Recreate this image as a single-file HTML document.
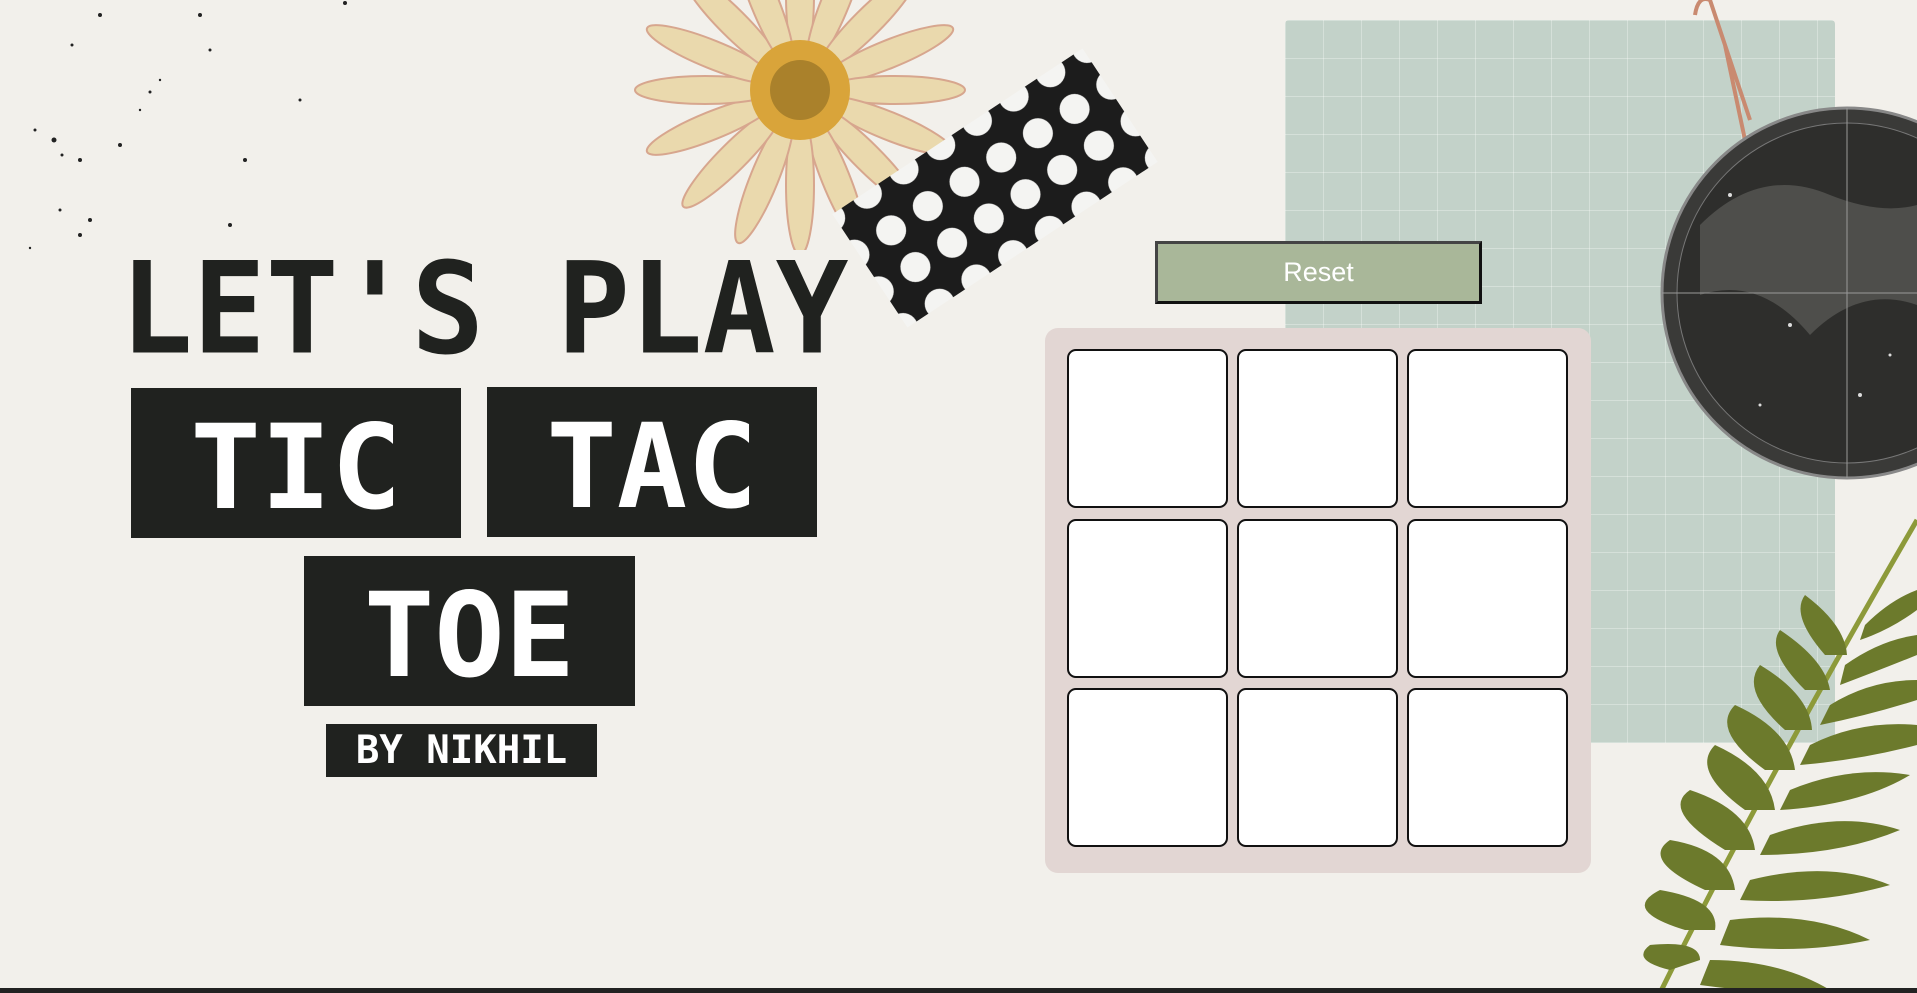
<!DOCTYPE html>
<html><head><meta charset="utf-8"><style>
html,body{margin:0;padding:0}
body{width:1917px;height:993px;position:relative;overflow:hidden;background:#f2f0eb;font-family:"DejaVu Sans Mono","Liberation Mono",monospace}
.abs{position:absolute}
.box{position:absolute;background:#20221f;color:#fff;font-weight:bold;display:flex;align-items:center;justify-content:center}
.cell{position:absolute;width:161px;height:159px;background:#fff;border:2px solid #111;border-radius:9px;box-sizing:border-box}
</style></head><body>
<svg class="abs" style="left:0;top:0" width="420" height="260">
<g fill="#222">
<circle cx="100" cy="15" r="2"/><circle cx="72" cy="45" r="1.5"/><circle cx="54" cy="140" r="2.5"/><circle cx="62" cy="155" r="1.5"/><circle cx="80" cy="160" r="2"/><circle cx="120" cy="145" r="2"/><circle cx="150" cy="92" r="1.5"/><circle cx="210" cy="50" r="1.5"/><circle cx="245" cy="160" r="2"/><circle cx="90" cy="220" r="2"/><circle cx="60" cy="210" r="1.5"/><circle cx="35" cy="130" r="1.5"/><circle cx="300" cy="100" r="1.5"/><circle cx="230" cy="225" r="2"/><circle cx="80" cy="235" r="2"/><circle cx="160" cy="80" r="1.2"/><circle cx="200" cy="15" r="2"/><circle cx="140" cy="110" r="1.2"/><circle cx="345" cy="3" r="2"/><circle cx="30" cy="248" r="1.2"/>
</g></svg>
<div class="abs" style="left:1285px;top:20px;width:550px;height:723px;background-color:#c3d2c9;background-image:linear-gradient(rgba(255,255,255,.3) 1px,transparent 1px),linear-gradient(90deg,rgba(255,255,255,.3) 1px,transparent 1px);background-size:38px 38px;border-radius:4px"></div>
<svg class="abs" style="left:1690px;top:0" width="120" height="150"><path d="M5 15 Q8 -5 20 0 L60 120 M35 45 L55 140" stroke="#c98a70" stroke-width="4" fill="none"/></svg>
<svg class="abs" style="left:1660px;top:105px" width="257" height="375">
<circle cx="187" cy="188" r="185" fill="#3a3a38" stroke="#888" stroke-width="3"/>
<circle cx="187" cy="188" r="170" fill="#2e2e2c" stroke="#777" stroke-width="1"/>
<path d="M40 120 Q100 60 170 90 Q220 110 257 100 L257 200 Q200 180 150 230 Q100 170 40 190Z" fill="#4e4e4b"/>
<path d="M2 188 H257 M187 3 V373" stroke="#999" stroke-width="1"/>
<g fill="#ddd"><circle cx="70" cy="90" r="2"/><circle cx="130" cy="220" r="2"/><circle cx="200" cy="290" r="2"/><circle cx="100" cy="300" r="1.5"/><circle cx="230" cy="250" r="1.5"/></g>
</svg>
<svg class="abs" style="left:630px;top:0" width="340" height="250">
<g transform="translate(170,90)">
<g fill="#ead9ad" stroke="#d7a68e" stroke-width="2">
<ellipse cx="0" cy="-95" rx="14" ry="70" transform="rotate(0)"/>
<ellipse cx="0" cy="-95" rx="14" ry="70" transform="rotate(22)"/>
<ellipse cx="0" cy="-95" rx="14" ry="70" transform="rotate(45)"/>
<ellipse cx="0" cy="-95" rx="14" ry="70" transform="rotate(68)"/>
<ellipse cx="0" cy="-95" rx="14" ry="70" transform="rotate(90)"/>
<ellipse cx="0" cy="-95" rx="14" ry="70" transform="rotate(112)"/>
<ellipse cx="0" cy="-95" rx="14" ry="70" transform="rotate(135)"/>
<ellipse cx="0" cy="-95" rx="14" ry="70" transform="rotate(158)"/>
<ellipse cx="0" cy="-95" rx="14" ry="70" transform="rotate(180)"/>
<ellipse cx="0" cy="-95" rx="14" ry="70" transform="rotate(202)"/>
<ellipse cx="0" cy="-95" rx="14" ry="70" transform="rotate(225)"/>
<ellipse cx="0" cy="-95" rx="14" ry="70" transform="rotate(248)"/>
<ellipse cx="0" cy="-95" rx="14" ry="70" transform="rotate(270)"/>
<ellipse cx="0" cy="-95" rx="14" ry="70" transform="rotate(292)"/>
<ellipse cx="0" cy="-95" rx="14" ry="70" transform="rotate(315)"/>
<ellipse cx="0" cy="-95" rx="14" ry="70" transform="rotate(338)"/>
</g>
<circle r="50" fill="#d9a43a"/><circle r="30" fill="#8a6a22" opacity=".6"/>
</g></svg>
<svg class="abs" style="left:830px;top:20px" width="340" height="330">
<defs><pattern id="dots" width="44" height="44" patternUnits="userSpaceOnUse"><rect width="44" height="44" fill="#1c1c1c"/><circle cx="22" cy="22" r="15" fill="#f4f4f2"/></pattern></defs>
<g transform="translate(165,168) rotate(-33.5)"><rect x="-150" y="-68" width="300" height="136" fill="url(#dots)"/></g>
</svg>
<svg class="abs" style="left:1640px;top:490px" width="277" height="503">
<path d="M20 503 Q120 300 277 30" stroke="#8d9a3a" stroke-width="5" fill="none"/>
<g fill="#6c7a2c">
<path d="M30 480 Q-10 470 10 455 Q60 450 60 470Z"/>
<path d="M45 440 Q-20 420 20 400 Q80 410 75 440Z"/>
<path d="M65 400 Q0 370 30 350 Q90 360 95 400Z"/>
<path d="M85 360 Q20 320 50 300 Q110 320 115 360Z"/>
<path d="M105 320 Q50 280 75 255 Q130 280 135 320Z"/>
<path d="M125 280 Q70 240 95 215 Q150 240 155 280Z"/>
<path d="M145 240 Q100 200 120 175 Q170 205 172 240Z"/>
<path d="M165 200 Q125 160 140 140 Q185 170 190 200Z"/>
<path d="M185 165 Q150 125 165 105 Q205 135 207 165Z"/>
<path d="M70 470 Q140 470 190 500 Q130 505 60 495Z"/>
<path d="M90 430 Q170 420 230 450 Q160 465 80 455Z"/>
<path d="M110 390 Q190 370 250 395 Q180 415 100 410Z"/>
<path d="M130 345 Q200 320 260 340 Q200 365 120 365Z"/>
<path d="M150 300 Q210 275 270 285 Q220 315 140 320Z"/>
<path d="M170 255 Q220 230 277 235 L277 255 Q220 270 160 275Z"/>
<path d="M190 215 Q230 190 277 190 L277 210 Q230 225 180 235Z"/>
<path d="M205 175 Q240 150 277 145 L277 165 Q240 180 200 195Z"/>
<path d="M225 135 Q250 110 277 100 L277 120 Q250 140 220 150Z"/>
</g></svg>
<div class="abs" style="left:120px;top:236px;font-size:121px;font-weight:bold;color:#20221f;line-height:140px;white-space:pre;transform:scaleY(1.05);transform-origin:top left">LET'S PLAY</div>
<div class="box" style="left:131px;top:388px;width:330px;height:150px;font-size:117px;padding-top:8px;box-sizing:border-box">TIC</div>
<div class="box" style="left:487px;top:387px;width:330px;height:150px;font-size:117px;padding-top:8px;box-sizing:border-box">TAC</div>
<div class="box" style="left:304px;top:556px;width:331px;height:150px;font-size:117px;padding-top:8px;box-sizing:border-box">TOE</div>
<div class="box" style="left:326px;top:724px;width:271px;height:53px;font-size:39px">BY NIKHIL</div>
<div class="abs" style="left:1155px;top:241px;width:327px;height:63px;box-sizing:border-box;background:#a9b799;border:3px solid #444;border-right-color:#111;border-bottom-color:#111;color:#fff;font-family:'Liberation Sans',sans-serif;font-size:27px;display:flex;align-items:center;justify-content:center">Reset</div>
<div class="abs" style="left:1045px;top:328px;width:546px;height:545px;background:#e2d6d3;border-radius:13px"></div>
<div class="cell" style="left:1067px;top:349px"></div>
<div class="cell" style="left:1237px;top:349px"></div>
<div class="cell" style="left:1407px;top:349px"></div>
<div class="cell" style="left:1067px;top:519px"></div>
<div class="cell" style="left:1237px;top:519px"></div>
<div class="cell" style="left:1407px;top:519px"></div>
<div class="cell" style="left:1067px;top:688px"></div>
<div class="cell" style="left:1237px;top:688px"></div>
<div class="cell" style="left:1407px;top:688px"></div>
<div class="abs" style="left:0;top:988px;width:1917px;height:5px;background:#222"></div>
</body></html>
